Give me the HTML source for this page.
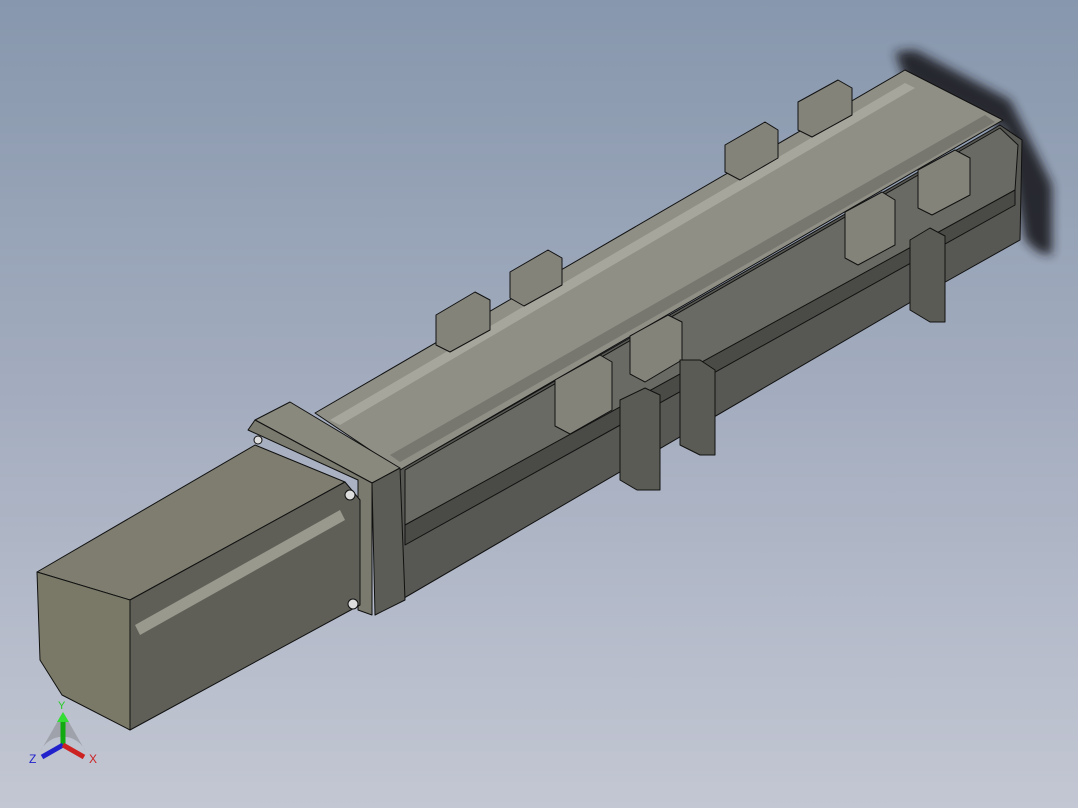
<!DOCTYPE html>
<html><head><style>
html,body{margin:0;padding:0;width:1078px;height:808px;overflow:hidden}
body{background:linear-gradient(180deg,#8797ad 0%,#a4adbf 50%,#c3c7d3 100%)}
svg{position:absolute;left:0;top:0}
</style></head><body>
<svg width="1078" height="808" viewBox="0 0 1078 808" stroke="#111" stroke-width="1" stroke-linejoin="round">
<defs><filter id="b" x="-20%" y="-20%" width="140%" height="140%"><feGaussianBlur stdDeviation="5"/></filter></defs>
<!-- shadow at right end -->
<polygon points="895,52 915,50 1010,100 1025,130 1040,160 1052,185 1052,255 1038,252 1025,240 1005,130 905,80" fill="#1e1e22" stroke="none" opacity="0.9" filter="url(#b)"/>
<!-- main beam side -->
<polygon points="400,470 1000,125 1022,140 1020,240 940,285 375,615" fill="#575753"/>
<polygon points="405,470 1000,128 1018,145 1015,190 405,540" fill="#6a6a64"/>
<polygon points="405,525 1015,190 1015,205 405,545" fill="#4a4a46"/>
<!-- beam top -->
<polygon points="315,413 905,70 1003,120 400,470" fill="#8f8f86"/>
<polygon points="330,420 905,83 915,88 340,425" fill="#a6a69c" stroke="none"/>
<polygon points="390,455 985,115 995,122 400,462" fill="#777770" stroke="none"/>
<!-- blocks -->
<g fill="#84837a">
<polygon points="436,315 475,292 490,300 490,330 450,352 436,345"/>
<polygon points="510,272 548,250 562,258 562,285 524,306 510,298"/>
<polygon points="725,145 765,122 778,130 778,158 740,180 725,172"/>
<polygon points="798,102 838,80 852,88 852,115 812,137 798,130"/>
<polygon points="555,380 600,355 612,362 612,410 570,434 555,426"/>
<polygon points="630,336 668,315 682,322 682,360 645,382 630,374"/>
<polygon points="845,212 882,192 895,200 895,245 858,265 845,258"/>
<polygon points="918,170 955,150 970,158 970,195 932,215 918,208"/>
</g>
<g fill="#5b5b55">
<polygon points="620,400 645,388 660,395 660,490 637,490 620,480"/>
<polygon points="680,360 700,360 715,370 715,455 700,455 680,445"/>
<polygon points="910,240 930,228 945,236 945,322 930,322 910,310"/>
</g>
<!-- flange -->
<polygon points="255,420 290,402 400,468 372,483" fill="#8a897e"/>
<polygon points="248,430 255,420 372,483 372,615 358,610 358,480" fill="#7b7a6e"/>
<polygon points="372,483 400,468 405,600 375,615" fill="#5c5c56"/>
<!-- motor -->
<polygon points="37,572 255,445 345,482 130,600" fill="#7e7d70"/>
<polygon points="130,600 345,482 360,500 360,605 130,730" fill="#5f5f58"/>
<polygon points="135,625 340,510 345,520 140,635" fill="#9a998e" stroke="none"/>
<polygon points="37,572 130,600 130,730 62,695 40,660" fill="#7a7968"/>
<circle cx="350" cy="495" r="5" fill="#ddd"/>
<circle cx="353" cy="604" r="5" fill="#ddd"/>
<circle cx="258" cy="440" r="4" fill="#ddd"/>
</svg>
<svg width="1078" height="808" viewBox="0 0 1078 808" style="pointer-events:none">
<path d="M40,752 A25,25 0 0 1 86,752 L63,712 Z" fill="#666" opacity="0.35"/>
<line x1="63" y1="745" x2="63" y2="720" stroke="#1a1" stroke-width="5"/>
<polygon points="57,722 69,722 63,712" fill="#3d3"/>
<line x1="63" y1="745" x2="42" y2="757" stroke="#22c" stroke-width="5"/>
<line x1="63" y1="745" x2="84" y2="757" stroke="#c22" stroke-width="5"/>
<text x="58" y="709" fill="#2c2" font-family="Liberation Sans,sans-serif" font-size="11">Y</text>
<text x="29" y="763" fill="#22c" font-family="Liberation Sans,sans-serif" font-size="12">Z</text>
<text x="89" y="763" fill="#c22" font-family="Liberation Sans,sans-serif" font-size="12">X</text>
</svg>
</body></html>
